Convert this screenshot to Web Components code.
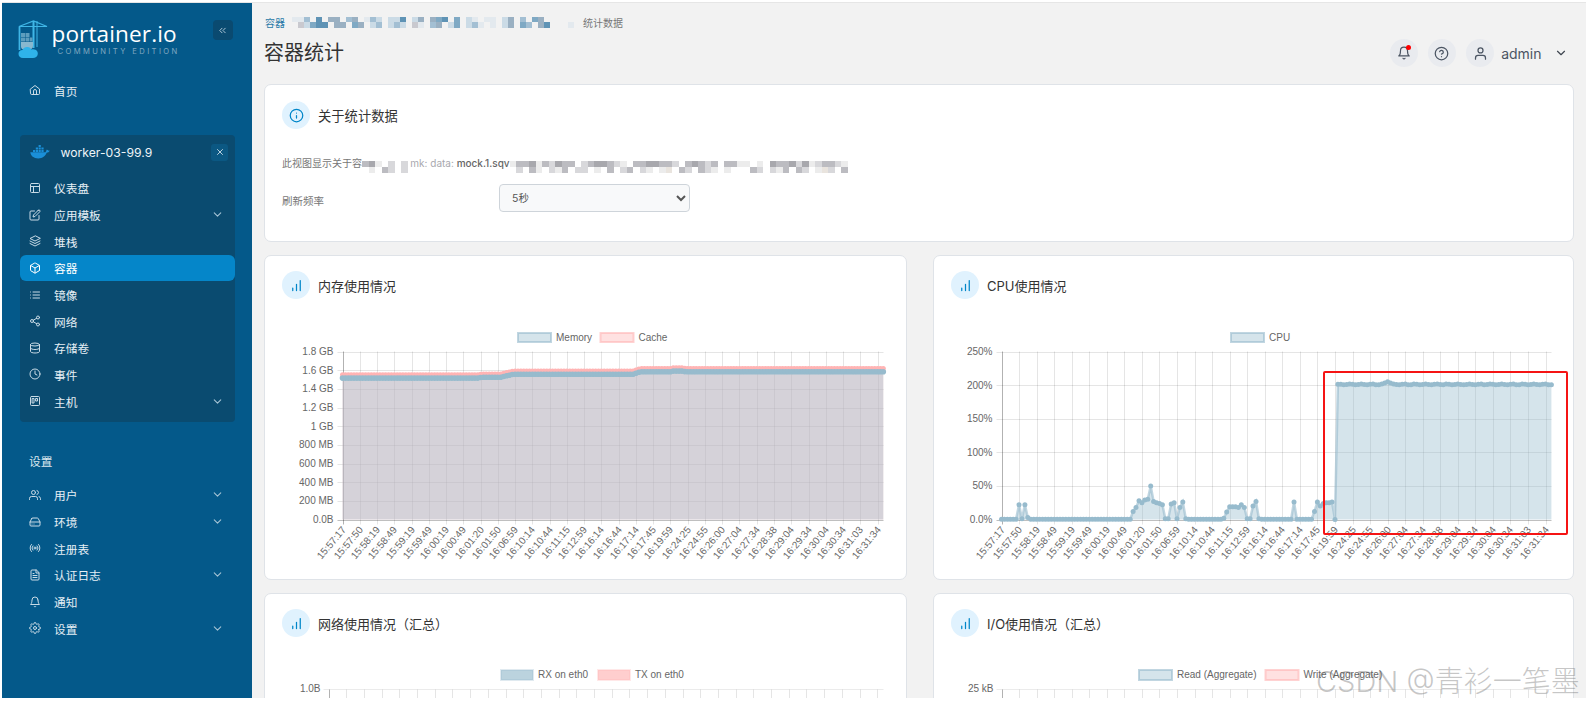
<!DOCTYPE html>
<html lang="zh-CN">
<head>
<meta charset="utf-8">
<title>容器统计</title>
<style>
html,body{margin:0;padding:0;background:#fff;height:710px;overflow:hidden;font-family:Inter,"Noto Sans CJK SC",sans-serif;}
</style>
</head>
<body>
<portainer-app>
  <side-bar slot="side">
    <side-item icon="home">首页</side-item>
    <env-box name="worker-03-99.9">
      <side-item icon="layout">仪表盘</side-item>
      <side-item icon="edit" chevron>应用模板</side-item>
      <side-item icon="layers">堆栈</side-item>
      <side-item icon="box" active>容器</side-item>
      <side-item icon="list">镜像</side-item>
      <side-item icon="share">网络</side-item>
      <side-item icon="database">存储卷</side-item>
      <side-item icon="clock">事件</side-item>
      <side-item icon="trello" chevron>主机</side-item>
    </env-box>
    <side-heading>设置</side-heading>
    <side-item icon="users" chevron>用户</side-item>
    <side-item icon="drive" chevron>环境</side-item>
    <side-item icon="radio">注册表</side-item>
    <side-item icon="file" chevron>认证日志</side-item>
    <side-item icon="bell">通知</side-item>
    <side-item icon="settings" chevron>设置</side-item>
  </side-bar>

  <bread-crumb>
    <span slot="link">容器</span>
    <pixel-mosaic slot="mask" cell="6" h="5.5" rows="eeb.f.gg.bg.ebc.ccf.cg.gaf.a.ce.ee.cg.b.ag......|.dcaff.gg.ag.cb.cbc.de.bg.ca.cbe.e.cg.ab.gf...e."></pixel-mosaic>
    <span slot="tail">统计数据</span>
  </bread-crumb>
  <top-bar>容器统计</top-bar>

  <stat-card icon="info" heading="关于统计数据" first>
    <about-panel></about-panel>
  </stat-card>

  <card-grid>
    <stat-card icon="chart" heading="内存使用情况">
      <stat-chart kind="memory" ox="265" oy="325"></stat-chart>
    </stat-card>
    <stat-card icon="chart" heading="CPU使用情况">
      <stat-chart kind="cpu" ox="934" oy="325"></stat-chart>
    </stat-card>
    <stat-card icon="chart" heading="网络使用情况（汇总）">
      <stat-chart kind="net" ox="265" oy="663"></stat-chart>
    </stat-card>
    <stat-card icon="chart" heading="I/O使用情况（汇总）">
      <stat-chart kind="io" ox="934" oy="663"></stat-chart>
    </stat-card>
  </card-grid>

  <mark-box slot="overlay"></mark-box>
  <water-mark slot="overlay">CSDN @青衫一笔墨</water-mark>
</portainer-app>

<script>
const ICONS = {
  home:'<path d="M3 10 12 3l9 7v9a2 2 0 0 1-2 2H5a2 2 0 0 1-2-2z"/><path d="M9 21v-7a3 3 0 0 1 6 0v7"/>',
  layout:'<rect x="3" y="3" width="18" height="18" rx="2"/><path d="M3 9h18M9 21V9"/>',
  edit:'<path d="M11 4H4a2 2 0 0 0-2 2v14a2 2 0 0 0 2 2h14a2 2 0 0 0 2-2v-7"/><path d="M18.5 2.5a2.121 2.121 0 0 1 3 3L12 15l-4 1 1-4 9.5-9.5z"/>',
  layers:'<path d="M12 2 2 7l10 5 10-5z"/><path d="m2 17 10 5 10-5"/><path d="m2 12 10 5 10-5"/>',
  box:'<path d="M21 16V8a2 2 0 0 0-1-1.73l-7-4a2 2 0 0 0-2 0l-7 4A2 2 0 0 0 3 8v8a2 2 0 0 0 1 1.73l7 4a2 2 0 0 0 2 0l7-4A2 2 0 0 0 21 16z"/><path d="M3.27 6.96 12 12.01l8.73-5.05"/><path d="M12 22.08V12"/>',
  list:'<path d="M8 6h13M8 12h13M8 18h13M3 6h.01M3 12h.01M3 18h.01"/>',
  share:'<circle cx="18" cy="5" r="3"/><circle cx="6" cy="12" r="3"/><circle cx="18" cy="19" r="3"/><path d="m8.59 13.51 6.83 3.98M15.41 6.51l-6.82 3.98"/>',
  database:'<ellipse cx="12" cy="5" rx="9" ry="3"/><path d="M21 12c0 1.66-4 3-9 3s-9-1.34-9-3"/><path d="M3 5v14c0 1.66 4 3 9 3s9-1.34 9-3V5"/>',
  clock:'<circle cx="12" cy="12" r="10"/><path d="M12 6v6l4 2"/>',
  trello:'<rect x="3" y="3" width="18" height="18" rx="2"/><rect x="7" y="7" width="3" height="9"/><rect x="14" y="7" width="3" height="5"/>',
  users:'<path d="M17 21v-2a4 4 0 0 0-4-4H5a4 4 0 0 0-4 4v2"/><circle cx="9" cy="7" r="4"/><path d="M23 21v-2a4 4 0 0 0-3-3.87"/><path d="M16 3.13a4 4 0 0 1 0 7.75"/>',
  drive:'<path d="M22 12H2"/><path d="M5.45 5.11 2 12v6a2 2 0 0 0 2 2h16a2 2 0 0 0 2-2v-6l-3.45-6.89A2 2 0 0 0 16.76 4H7.24a2 2 0 0 0-1.79 1.11z"/><path d="M6 16h.01M10 16h.01"/>',
  radio:'<circle cx="12" cy="12" r="2"/><path d="M16.24 7.76a6 6 0 0 1 0 8.49m-8.48-.01a6 6 0 0 1 0-8.49m11.31-2.82a10 10 0 0 1 0 14.14m-14.14 0a10 10 0 0 1 0-14.14"/>',
  file:'<path d="M14 2H6a2 2 0 0 0-2 2v16a2 2 0 0 0 2 2h12a2 2 0 0 0 2-2V8z"/><path d="M14 2v6h6M16 13H8M16 17H8M10 9H8"/>',
  bell:'<path d="M18 8A6 6 0 0 0 6 8c0 7-3 9-3 9h18s-3-2-3-9"/><path d="M13.73 21a2 2 0 0 1-3.46 0"/>',
  settings:'<circle cx="12" cy="12" r="3"/><path d="M19.4 15a1.65 1.65 0 0 0 .33 1.82l.06.06a2 2 0 0 1 0 2.83 2 2 0 0 1-2.83 0l-.06-.06a1.65 1.65 0 0 0-1.82-.33 1.65 1.65 0 0 0-1 1.51V21a2 2 0 0 1-2 2 2 2 0 0 1-2-2v-.09A1.65 1.65 0 0 0 9 19.4a1.65 1.65 0 0 0-1.82.33l-.06.06a2 2 0 0 1-2.83 0 2 2 0 0 1 0-2.83l.06-.06a1.65 1.65 0 0 0 .33-1.82 1.65 1.65 0 0 0-1.51-1H3a2 2 0 0 1-2-2 2 2 0 0 1 2-2h.09A1.65 1.65 0 0 0 4.6 9a1.65 1.65 0 0 0-.33-1.82l-.06-.06a2 2 0 0 1 0-2.83 2 2 0 0 1 2.83 0l.06.06a1.65 1.65 0 0 0 1.82.33H9a1.65 1.65 0 0 0 1-1.51V3a2 2 0 0 1 2-2 2 2 0 0 1 2 2v.09a1.65 1.65 0 0 0 1 1.51 1.65 1.65 0 0 0 1.82-.33l.06-.06a2 2 0 0 1 2.83 0 2 2 0 0 1 0 2.83l-.06.06a1.65 1.65 0 0 0-.33 1.82V9a1.65 1.65 0 0 0 1.51 1H21a2 2 0 0 1 2 2 2 2 0 0 1-2 2h-.09a1.65 1.65 0 0 0-1.51 1z"/>',
  chevron:'<path d="m6 9 6 6 6-6"/>',
  dleft:'<path d="m11 17-5-5 5-5M18 17l-5-5 5-5"/>',
  close:'<path d="M18 6 6 18M6 6l12 12"/>',
  help:'<circle cx="12" cy="12" r="10"/><path d="M9.09 9a3 3 0 0 1 5.83 1c0 2-3 3-3 3"/><path d="M12 17h.01"/>',
  user:'<path d="M20 21v-2a4 4 0 0 0-4-4H8a4 4 0 0 0-4 4v2"/><circle cx="12" cy="7" r="4"/>',
  info:'<circle cx="12" cy="12" r="10"/><path d="M12 16v-4M12 8h.01"/>',
  chart:'<path d="M6 20v-4M12 20V10M18 20V4"/>'
};

class PIcon extends HTMLElement {
  connectedCallback() {
    const s = this.getAttribute('size') || 12, w = this.getAttribute('weight') || 2;
    this.attachShadow({mode:'open'}).innerHTML =
      `<style>:host{display:inline-flex;flex:none;width:${s}px;height:${s}px}svg{width:100%;height:100%;display:block}</style>
       <svg viewBox="0 0 24 24" fill="none" stroke="currentColor" stroke-width="${w}" stroke-linecap="round" stroke-linejoin="round">${ICONS[this.getAttribute('name')]||''}</svg>`;
  }
}
customElements.define('p-icon', PIcon);

class PortainerApp extends HTMLElement {
  constructor() {
    super();
    this.attachShadow({mode:'open'}).innerHTML = `<style>
      :host{display:flex;box-sizing:border-box;margin:2px 0 0 2px;height:696px;border-top:1px solid #e6e6e6;overflow:hidden;position:relative;background:#f2f2f2}
      .main{flex:1;min-width:0;box-sizing:border-box;padding:12px 12px 0 12px;overflow:hidden}
    </style><slot name="side"></slot><div class="main"><slot></slot></div><slot name="overlay"></slot>`;
  }
}
customElements.define('portainer-app', PortainerApp);

class SideBar extends HTMLElement {
  constructor() {
    super();
    this.attachShadow({mode:'open'}).innerHTML = `<style>
      :host{display:block;flex:none;width:250px;box-sizing:border-box;background:#04598a;padding:17px 0 0 15.5px;color:#e6eff5}
      .logo{display:flex;height:38px;width:215px;position:relative}
      .logo svg{flex:none;width:30px;height:39px;margin-left:.5px}
      .word{margin-left:3.5px;display:flex;flex-direction:column;padding-top:1px}
      .name{font:400 22.6px/26px "Open Sans",Inter,sans-serif;color:#fff;letter-spacing:.1px}
      .ed{font:400 7.6px/9px Inter,sans-serif;color:#7fa7c0;letter-spacing:2.4px;margin-left:6px;white-space:nowrap}
      button{margin:0 0 0 auto;width:20px;height:20px;border:0;border-radius:4px;background:#0a4a70;color:#b9cfdd;display:flex;align-items:center;justify-content:center;padding:0}
      .rest{margin:19px 0 0 2px;width:215px}
    </style>
    <div class="logo">
      <svg viewBox="0 0 30 39" fill="none">
        <path d="M1 6.5 15.5 1 29 6.5z" stroke="#3fb6e6" stroke-width="1.2"/>
        <path d="M1.5 6.5V30" stroke="#3fb6e6" stroke-width="1.8"/>
        <path d="M15.5 1V28" stroke="#3fb6e6" stroke-width="2"/>
        <path d="M19 1v26" stroke="#3fb6e6" stroke-width="1"/>
        <path d="M3 13h4v4H3zM7.5 13h4v4h-4zM3 17.5h4v4H3zM7.5 17.5h4v4h-4zM12 17.5h2.500v4H12z" fill="#5d9dbd"/>
        <path d="M3 22h12v3.500a4 4 0 0 1-4 4H6a3 3 0 0 1-3-3z" fill="#88b8cf"/>
        <path d="M5 38c-3 0-4.500-2-4.500-4.300C.5 31.500 2.200 30 4.500 30c.8-2 2.800-3.200 5-3 2 .2 3.300 1.200 4 2.600 1-.6 2.800-.6 4 .2 1.700 1 2.500 2.500 2.300 4.200-.3 2.400-2.300 4-4.800 4z" fill="#2fb3ea"/>
      </svg>
      <div class="word"><div class="name">portainer.io</div><div class="ed">COMMUNITY EDITION</div></div>
      <button aria-label="collapse"><p-icon name="dleft" size="11"></p-icon></button>
    </div>
    <div class="rest"><slot></slot></div>`;
  }
}
customElements.define('side-bar', SideBar);

class SideItem extends HTMLElement {
  connectedCallback() {
    const chev = this.hasAttribute('chevron');
    this.attachShadow({mode:'open'}).innerHTML = `<style>
      :host{display:flex;align-items:center;height:26.67px;box-sizing:border-box;padding:0 10.500px 0 9.500px;font-size:11.700px;color:#e6eff5;border-radius:6px}
      :host([active]){background:#0586c9;color:#fff}
      .i{color:#c9dbe6}
      :host([active]) .i{color:#fff}
      .t{margin-left:13px;white-space:nowrap}
      .c{margin-left:auto;color:#a5c3d5}
    </style><p-icon class="i" name="${this.getAttribute('icon')}" size="12"></p-icon><span class="t"><slot></slot></span>${chev?'<p-icon class="c" name="chevron" size="13"></p-icon>':''}`;
  }
}
customElements.define('side-item', SideItem);

class EnvBox extends HTMLElement {
  connectedCallback() {
    this.attachShadow({mode:'open'}).innerHTML = `<style>
      :host{display:block;margin-top:31.300px;background:#0a4b70;border-radius:4px;padding-bottom:7.300px}
      .h{display:flex;align-items:center;height:39.600px;padding:0 6.500px 5px 10.500px;box-sizing:border-box}
      .n{margin-left:10.500px;font-size:12.200px;color:#eef4f8;white-space:nowrap}
      svg{flex:none;width:20px;height:14px;margin-top:-1px}
      button{margin-left:auto;width:17px;height:17px;border:0;padding:0;background:#0b5883;color:#dbe7ef;border-radius:3px;display:flex;align-items:center;justify-content:center}
    </style>
    <div class="h">
      <svg viewBox="0 0 20 14"><path d="M.3 7.300h15.200c.7-.9 1-1.600 1-2.500.9-.2 1.700.2 2.200.9l1.100-.2c-.7 1.400-1.900 2.200-3.200 2.300-1.200 3.300-4 5.600-8.300 5.600-4.800 0-7.500-2.500-8-6.100z" fill="#1a8fd8"/><path d="M3 5h2.200v2H3zM5.800 5H8v2H5.800zM8.600 5h2.200v2H8.600zM11.400 5h2.200v2h-2.200zM5.800 2.400H8v2H5.800zM8.600 2.400h2.200v2H8.600zM11.400 2.400h2.200v2h-2.200zM8.600 0h2.200v1.900H8.600z" fill="#1a8fd8"/></svg>
      <span class="n">${this.getAttribute('name')}</span>
      <button aria-label="close"><p-icon name="close" size="10"></p-icon></button>
    </div><slot></slot>`;
  }
}
customElements.define('env-box', EnvBox);

class SideHeading extends HTMLElement {
  constructor() {
    super();
    this.attachShadow({mode:'open'}).innerHTML = `<style>:host{display:block;margin:32.300px 0 11.600px 9.500px;font-size:11.700px;line-height:16px;color:#dce8ef}</style><slot></slot>`;
  }
}
customElements.define('side-heading', SideHeading);

class PixelMosaic extends HTMLElement {
  connectedCallback() {
    const P = {a:'#7fa9c4',b:'#a3bfd3',c:'#cbdbe6',d:'#c9c9cf',e:'#e3e9ee',f:'#5f93b5',g:'#9ab0c2',h:'#bcbcc1',i:'#d8d8db',j:'#a8a8ad',k:'#ececec',l:'#e9e4de','.':'transparent'};
    const cell = +this.getAttribute('cell'), h = +this.getAttribute('h');
    const rows = this.getAttribute('rows').split('|');
    const cols = Math.max(...rows.map(r => r.length));
    let out = '';
    for (const r of rows) for (const ch of r.padEnd(cols, '.')) out += `<i style="background:${P[ch]||'transparent'}"></i>`;
    this.attachShadow({mode:'open'}).innerHTML = `<style>
      :host{display:grid;flex:none;grid-template-columns:repeat(${cols},${cell}px);grid-auto-rows:${h}px}
      i{display:block}
    </style>${out}`;
  }
}
customElements.define('pixel-mosaic', PixelMosaic);

class BreadCrumb extends HTMLElement {
  constructor() {
    super();
    this.attachShadow({mode:'open'}).innerHTML = `<style>
      :host{display:flex;align-items:center;height:14px;font-size:10px;color:#777;padding-left:1px;white-space:nowrap}
      ::slotted([slot=link]){color:#2b7aa8}
      ::slotted([slot=mask]){margin:0 3px 0 7px}
    </style><slot name="link"></slot><slot name="mask"></slot><slot name="tail"></slot>`;
  }
}
customElements.define('bread-crumb', BreadCrumb);

class TopBar extends HTMLElement {
  constructor() {
    super();
    this.attachShadow({mode:'open'}).innerHTML = `<style>
      :host{display:flex;align-items:center;height:28px;margin-top:10px;padding:0 6px 0 0}
      h1{margin:0;font-size:20px;font-weight:400;color:#333;line-height:28px}
      .r{margin-left:auto;display:flex;align-items:center}
      .b{width:28px;height:28px;border-radius:50%;background:#e9ebef;color:#4b5563;display:flex;align-items:center;justify-content:center;margin-left:10.250px;position:relative}
      .dot{position:absolute;left:16px;top:6px;width:5px;height:5px;border-radius:50%;background:#f00}
      .u{font-size:14px;color:#4b5563;margin:0 12.500px 0 7px}
      .c{color:#3f4650}
    </style><h1><slot></slot></h1>
    <div class="r">
      <div class="b"><p-icon name="bell" size="14"></p-icon><span class="dot"></span></div>
      <div class="b"><p-icon name="help" size="15"></p-icon></div>
      <div class="b"><p-icon name="user" size="15"></p-icon></div>
      <span class="u">admin</span><p-icon class="c" name="chevron" size="14"></p-icon>
    </div>`;
  }
}
customElements.define('top-bar', TopBar);

class StatCard extends HTMLElement {
  connectedCallback() {
    this.attachShadow({mode:'open'}).innerHTML = `<style>
      :host{display:block;box-sizing:border-box;background:#fff;border:1px solid #dfe3e8;border-radius:7px;min-width:0;overflow:hidden}
      :host([first]){margin:17px 0 13px}
      .h{display:flex;align-items:center;padding:15px 0 0 17px}
      :host([first]) .h{padding-top:16px}
      .ci{width:28px;height:28px;border-radius:50%;background:#e0f2fe;color:#0086c9;display:flex;align-items:center;justify-content:center;flex:none}
      .t{margin-left:8px;font-size:13px;color:#333;white-space:nowrap}
      :host([first]) .t{font-size:13.300px}
    </style><div class="h"><span class="ci"><p-icon name="${this.getAttribute('icon')}" size="15"></p-icon></span><span class="t">${this.getAttribute('heading')}</span></div><slot></slot>`;
  }
}
customElements.define('stat-card', StatCard);

class AboutPanel extends HTMLElement {
  constructor() {
    super();
    this.attachShadow({mode:'open'}).innerHTML = `<style>
      :host{display:block;padding:26px 0 29px 17px;font-size:10px;color:#777}
      .d{display:flex;align-items:flex-start;height:16px;line-height:16px;white-space:nowrap}
      .m{color:#a8a8ae}
      .v{color:#666;font-weight:500}
      pixel-mosaic{margin-top:6px}
      .r{display:grid;grid-template-columns:217px 191px;align-items:center;margin-top:13px}
      .l{font-size:10.500px;padding-top:4px}
      select{height:28px;width:191px;box-sizing:border-box;border:1px solid #ced4da;border-radius:4px;background-color:#f8f9fa;color:#555;font:10.500px Inter,"Noto Sans CJK SC",sans-serif;padding:0 8px}
    </style>
    <div class="d"><span>此视图显示关于容</span>
      <pixel-mosaic cell="6.500" h="6" rows="hjk.i.i|.k.hi.i"></pixel-mosaic>
      <span class="m">&nbsp;mk: data:&nbsp;</span><span class="v">mock.1.sqv</span>
      <pixel-mosaic cell="6.500" h="6" rows="khhjkhijhh.ihjjhik.hhjjhhi.hjhih.hhkk.k.jhhjijkihhik|.i.hk.ikh.ii.k.h.ih.ik.kl.hi.hik.k...hi.ikh.hi.kli.h"></pixel-mosaic>
    </div>
    <div class="r"><span class="l">刷新频率</span><select aria-label="刷新频率"><option>5秒</option><option>10秒</option><option>30秒</option></select></div>`;
  }
}
customElements.define('about-panel', AboutPanel);

class CardGrid extends HTMLElement {
  constructor() {
    super();
    this.attachShadow({mode:'open'}).innerHTML = `<style>:host{display:grid;grid-template-columns:643px 641px;column-gap:26px;row-gap:13px}</style><slot></slot>`;
  }
}
customElements.define('card-grid', CardGrid);

const LABELS = '15:57:17 15:57:50 15:58:19 15:58:49 15:59:19 15:59:49 16:00:19 16:00:49 16:01:20 16:01:50 16:06:59 16:10:14 16:10:44 16:11:15 16:12:59 16:16:14 16:16:44 16:17:14 16:17:45 16:19:59 16:24:25 16:24:55 16:26:00 16:27:04 16:27:34 16:28:38 16:29:04 16:29:34 16:30:04 16:30:34 16:31:03 16:31:34'.split(' ');

function cpuValues() {
  const v = new Array(189).fill(0.5);
  const set = {6:22,7:1,8:22,9:3,45:12,46:18,47:28,48:25,49:29,50:30,51:50,52:27,53:25,54:24,55:22,56:1,57:1,58:23,59:25,60:1,61:18,62:26,63:1,76:2,77:11,78:19,79:19,80:19,81:18,82:22,83:18,84:1,85:1,86:20,87:27,88:1,100:26,107:12,108:26,109:20,110:24,111:25,112:25,113:26,114:0};
  for (const k in set) v[k] = set[k];
  for (let i = 115; i < 189; i++) v[i] = 201 + Math.sin(i * 1.7) * .6;
  v[131] = 203; v[132] = 205; v[133] = 203;
  return v;
}
function lerp(a, x) {
  for (let i = 1; i < a.length; i++) if (x <= a[i][0]) {
    const t = (x - a[i-1][0]) / (a[i][0] - a[i-1][0]);
    return a[i-1][1] + t * (a[i][1] - a[i-1][1]);
  }
  return a[a.length-1][1];
}

class StatChart extends HTMLElement {
  connectedCallback() {
    const kind = this.getAttribute('kind'), ox = +this.getAttribute('ox'), oy = +this.getAttribute('oy');
    const T = 'font-family="Liberation Sans,Arial,sans-serif" font-size="10" fill="#666"';
    let s = '';
    const hline = (x1,x2,y,c='rgba(0,0,0,.1)') => `<line x1="${x1}" x2="${x2}" y1="${y}" y2="${y}" stroke="${c}"/>`;
    const vline = (x,y1,y2,c='rgba(0,0,0,.1)') => `<line x1="${x}" x2="${x}" y1="${y1}" y2="${y2}" stroke="${c}"/>`;
    const legend = (items, y, h) => items.map(i => `<rect x="${i.x+1}" y="${y+1}" width="${i.w-2}" height="${h-2}" fill="${i.f}" stroke="${i.s}" stroke-width="2"/><text x="${i.x+i.w+4}" y="${y+9}" ${T}>${i.t}</text>`).join('');
    const B = {f:'rgba(151,187,205,.4)', s:'rgba(151,187,205,.6)'}, R = {f:'rgba(255,180,180,.4)', s:'rgba(255,180,180,.6)'};

    if (kind === 'memory' || kind === 'cpu') {
      const L = kind === 'memory' ? 342.5 : 1001.5, G = kind === 'memory' ? 17.26 : 17.55, E = kind === 'memory' ? 883.5 : 1551.5;
      const top = 352.5, bot = 520.5;
      const ticks = kind === 'memory' ? ['0.0B','200 MB','400 MB','600 MB','800 MB','1 GB','1.2 GB','1.4 GB','1.6 GB','1.8 GB'] : ['0.0%','50%','100%','150%','200%','250%'];
      const step = (bot - top) / (ticks.length - 1);
      ticks.forEach((t, i) => {
        const y = bot - i * step;
        s += hline(L - 5, E, Math.round(y) + .5, i === 0 ? 'rgba(0,0,0,.25)' : 'rgba(0,0,0,.1)');
        s += `<text x="${L - 9}" y="${y + 3.5}" text-anchor="end" ${T}>${t}</text>`;
      });
      LABELS.forEach((t, i) => {
        const x = Math.round(L + i * G) + .5;
        s += vline(x, top, bot + 5, i === 0 ? 'rgba(0,0,0,.3)' : 'rgba(0,0,0,.1)');
        s += `<text transform="translate(${x + 3} 531) rotate(-50)" text-anchor="end" ${T}>${t}</text>`;
      });
      const series = (vals, max, col, r, sw) => {
        const sp = G / 6;
        const pts = vals.map((v, i) => [L + i * sp, bot - v / max * (bot - top)]);
        const d = pts.map(p => p[0].toFixed(1) + ',' + p[1].toFixed(1)).join(' ');
        let o = `<polygon points="${L},${bot} ${d} ${pts[pts.length-1][0].toFixed(1)},${bot}" fill="rgba(${col},.4)"/>`;
        o += `<polyline points="${d}" fill="none" stroke="rgba(${col},.6)" stroke-width="${sw}"/>`;
        o += pts.map(p => `<circle cx="${p[0].toFixed(1)}" cy="${p[1].toFixed(1)}" r="${r}" fill="rgb(${col})"/>`).join('');
        return o;
      };
      if (kind === 'memory') {
        const A = [[342,1.515],[478,1.515],[482,1.525],[501,1.525],[513,1.556],[633,1.556],[640,1.582],[670,1.582],[672,1.59],[683,1.59],[686,1.582],[884,1.582]];
        const xs = Array.from({length:189}, (_, i) => L + i * G / 6);
        s += series(xs.map(x => lerp(A, x) + .035), 1.8, '255,180,180', 2.5, 2);
        s += series(xs.map(x => lerp(A, x)), 1.8, '151,187,205', 2.8, 2);
        s += legend([{x:517,w:35,t:'Memory',...B},{x:599.5,w:35,t:'Cache',...R}], 333, 11);
      } else {
        s += series(cpuValues(), 250, '151,187,205', 2.5, 2.5);
        s += legend([{x:1230,w:35,t:'CPU',...B}], 333, 11);
      }
    } else {
      const L = kind === 'net' ? 328.5 : 1001.5, G = kind === 'net' ? 17.7 : 17.55, E = kind === 'net' ? 883.5 : 1551.5;
      const top = 690.5;
      s += hline(L - 5, E, top, 'rgba(0,0,0,.08)');
      for (let i = 0; i < 32; i++) {
        const x = Math.round(L + i * G) + .5;
        if (x < E) s += vline(x, top, 715, i === 0 ? 'rgba(0,0,0,.3)' : 'rgba(0,0,0,.1)');
      }
      s += `<text x="${L - 8}" y="693" text-anchor="end" ${T}>${kind === 'net' ? '1.0B' : '25 kB'}</text>`;
      if (kind === 'net') s += legend([{x:500,w:34,t:'RX on eth0',f:'rgba(151,187,205,.65)',s:'rgba(151,187,205,.3)'},{x:597,w:34,t:'TX on eth0',f:'rgba(255,180,180,.65)',s:'rgba(255,180,180,.3)'}], 670, 12);
      else s += legend([{x:1138,w:35,t:'Read (Aggregate)',...B},{x:1264.5,w:35,t:'Write (Aggregate)',...R}], 670, 12);
    }
    this.attachShadow({mode:'open'}).innerHTML = `<style>:host{display:block;margin-top:25px;height:255px}svg{display:block;width:100%;height:100%;overflow:hidden}</style>
      <svg xmlns="http://www.w3.org/2000/svg"><g transform="translate(${-ox} ${-oy})">${s}</g></svg>`;
  }
}
customElements.define('stat-chart', StatChart);

class MarkBox extends HTMLElement {
  constructor() {
    super();
    this.attachShadow({mode:'open'}).innerHTML = `<style>:host{position:absolute;left:1321px;top:367.500px;width:245px;height:164px;box-sizing:border-box;border:2.500px solid #f51414;border-radius:2px;pointer-events:none}</style>`;
  }
}
customElements.define('mark-box', MarkBox);

class WaterMark extends HTMLElement {
  constructor() {
    super();
    this.attachShadow({mode:'open'}).innerHTML = `<style>:host{position:absolute;left:1314px;top:663px;font:300 29px/32px Inter,"Noto Sans CJK SC",sans-serif;color:rgba(90,90,90,.34);white-space:nowrap;pointer-events:none}</style><slot></slot>`;
  }
}
customElements.define('water-mark', WaterMark);
</script>
</body>
</html>
